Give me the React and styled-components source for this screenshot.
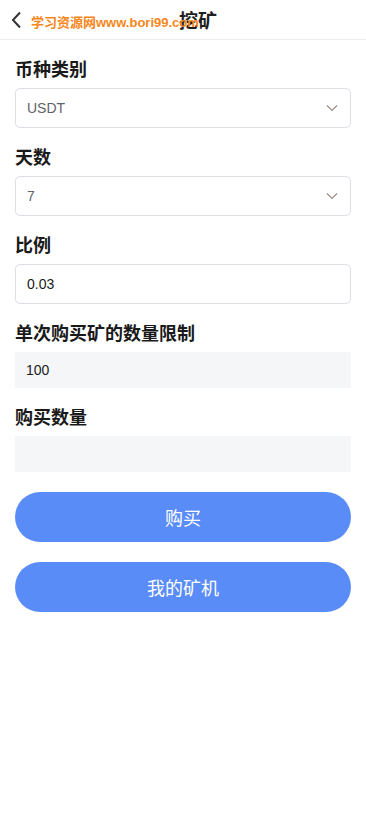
import React from "react";
import styled, { createGlobalStyle } from "styled-components";

const Global = createGlobalStyle`
  html, body { margin: 0; padding: 0; background: #fff; }
  body { font-family: "Noto Sans CJK SC", "Liberation Sans", sans-serif; }
  * { box-sizing: border-box; }
`;

const Page = styled.div`
  width: 366px;
  min-height: 829px;
  background: #fff;
`;

const Header = styled.div`
  position: relative;
  height: 40px;
  border-bottom: 1px solid #ededed;
  display: flex;
  align-items: center;
  justify-content: center;
`;

const Back = styled.div`
  position: absolute;
  left: 10px;
  top: 11px;
  width: 14px;
  height: 18px;
  display: flex;
`;

const Title = styled.h1`
  margin: 0 0 0 30px;
  font-size: 19px;
  font-weight: 700;
  color: #1f1f1f;
  line-height: 24px;
`;

const Watermark = styled.div`
  position: absolute;
  left: 31px;
  top: 14px;
  font-family: "Liberation Sans", "Noto Sans CJK SC", sans-serif;
  font-size: 13px;
  font-weight: 700;
  line-height: 18px;
  color: #f7861b;
  white-space: nowrap;
`;

const Form = styled.div`
  padding: 0 15px;
`;

const Label = styled.div`
  padding: 16px 0 8px;
  font-size: 18px;
  font-weight: 700;
  line-height: 24px;
  color: #1a1a1a;
`;

const Field = styled.div`
  height: ${(p) => (p.$filled ? "36px" : "40px")};
  border: ${(p) => (p.$filled ? "none" : "1px solid #dcdfe6")};
  border-radius: ${(p) => (p.$filled ? "0" : "5px")};
  background: ${(p) => (p.$filled ? "#f5f6f8" : "#fff")};
  display: flex;
  align-items: center;
  justify-content: space-between;
  padding: 0 12px 0 11px;
  font-family: "Liberation Sans", sans-serif;
  font-size: 14px;
  color: ${(p) => (p.$muted ? "#606266" : "#1a1a1a")};
`;

const Buttons = styled.div`
  display: flex;
  flex-direction: column;
  gap: 20px;
  padding-top: 20px;
`;

const Button = styled.button`
  height: 50px;
  border: none;
  border-radius: 25px;
  background: #5a8cf8;
  color: #fff;
  font-family: "Noto Sans CJK SC", sans-serif;
  font-size: 18px;
  font-weight: 400;
  cursor: pointer;
`;

const Chevron = () => (
  <svg width="12" height="8" viewBox="0 0 12 8">
    <path d="M1 1.5 L6 6.5 L11 1.5" fill="none" stroke="#a08e80" strokeWidth="1.2" />
  </svg>
);

const fields = [
  { label: "币种类别", value: "USDT", select: true },
  { label: "天数", value: "7", select: true },
  { label: "比例", value: "0.03" },
  { label: "单次购买矿的数量限制", value: "100", filled: true },
  { label: "购买数量", value: "", filled: true },
];

export default function App() {
  return (
    <Page>
      <Global />
      <Header>
        <Back>
          <svg width="14" height="18" viewBox="0 0 14 18">
            <path d="M10 1.5 L3 9 L10 16.5" fill="none" stroke="#333" strokeWidth="2" />
          </svg>
        </Back>
        <Title>挖矿</Title>
        <Watermark>学习资源网www.bori99.com</Watermark>
      </Header>
      <Form>
        {fields.map((f) => (
          <div key={f.label}>
            <Label>{f.label}</Label>
            <Field $filled={f.filled} $muted={f.select}>
              <span>{f.value}</span>
              {f.select && <Chevron />}
            </Field>
          </div>
        ))}
        <Buttons>
          <Button>购买</Button>
          <Button>我的矿机</Button>
        </Buttons>
      </Form>
    </Page>
  );
}
